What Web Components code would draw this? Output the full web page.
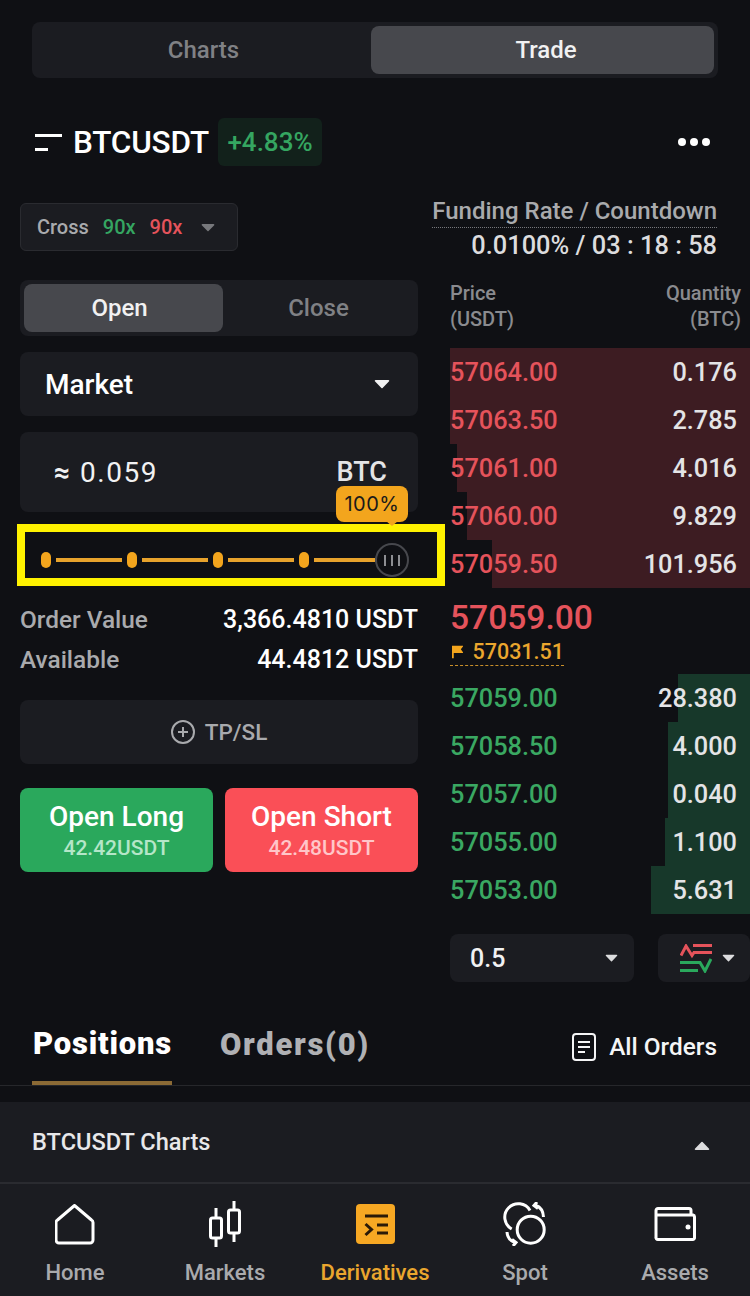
<!DOCTYPE html>
<html>
<head>
<meta charset="utf-8">
<title>BTCUSDT Trade</title>
<style>
  html, body { margin: 0; background: #0f1014; }
  body { font-family: Roboto, "Liberation Sans", sans-serif; width: 750px; height: 1296px; overflow: hidden; }
</style>
</head>
<body>
<trade-app></trade-app>
<script>
const CARET = (color, w = 16, h = 10) =>
  `<svg width="${w}" height="${h}" viewBox="0 0 16 10"><path d="M1.5 1h13a.8.8 0 0 1 .6 1.3L8.6 9a.8.8 0 0 1-1.2 0L.9 2.3A.8.8 0 0 1 1.5 1z" fill="${color}"/></svg>`;

class SegControl extends HTMLElement {
  connectedCallback() {
    const items = this.getAttribute("items").split(",");
    const active = this.getAttribute("active");
    // the active pill is a bit wider than its neighbour and its label sits off-centre
    const width = this.getAttribute("active-width");
    const shift = this.getAttribute("active-shift");
    this.attachShadow({ mode: "open" }).innerHTML = `
      <style>
        :host { display: flex; box-sizing: border-box; padding: 4px; background: #1b1c21; border-radius: 8px; height: 56px; }
        div { flex: 1; display: flex; align-items: center; justify-content: center; border-radius: 8px;
              font-size: 24px; font-weight: 500; color: #808185; }
        .on { flex: 0 0 ${width}px; box-sizing: border-box; background: #47484d; color: #f1f1f2; ${shift}; }
      </style>
      ${items.map(i => `<div class="${i === active ? "on" : ""}">${i}</div>`).join("")}`;
  }
}

class MarketHeader extends HTMLElement {
  connectedCallback() {
    this.attachShadow({ mode: "open" }).innerHTML = `
      <style>
        :host { display: flex; align-items: center; height: 48px; padding: 0 40px 0 34px; }
        svg { display: block; }
        .sym { width: 135px; white-space: nowrap; font-size: 31.500px; font-weight: 500; color: #fff; margin: 0 10px 0 11px; letter-spacing: -.2px; }
        .chg { height: 48px; width: 104px; display: flex; align-items: center; justify-content: center; background: #12211b;
               border-radius: 6px; color: #35a661; font-size: 26px; font-weight: 500; }
        .more { margin-left: auto; }
      </style>
      <svg width="28" height="18" viewBox="0 0 28 18"><path d="M1 2.500H28M1 16.500h13" stroke="#fff" stroke-width="3" fill="none"/></svg>
      <span class="sym">BTCUSDT</span>
      <span class="chg">+4.83%</span>
      <svg class="more" width="32" height="10" viewBox="0 0 32 10"><circle cx="4" cy="5" r="4" fill="#fff"/><circle cx="16" cy="5" r="4" fill="#fff"/><circle cx="28" cy="5" r="4" fill="#fff"/></svg>`;
  }
}

class LeverageChip extends HTMLElement {
  connectedCallback() {
    this.attachShadow({ mode: "open" }).innerHTML = `
      <style>
        :host { display: flex; align-items: center; box-sizing: border-box; width: 218px; height: 48px; padding-left: 16px;
                background: #1b1c21; border: 1px solid #2a2b30; border-radius: 6px; font-size: 20px; font-weight: 500; }
        .c { color: #a9aaad; margin-right: 14px; }
        .g { color: #35a661; margin-right: 14px; }
        .r { color: #e5535b; margin-right: 19px; }
      </style>
      <span class="c">Cross</span><span class="g">90x</span><span class="r">90x</span>${CARET("#77787c", 14, 9)}`;
  }
}

class FundingInfo extends HTMLElement {
  connectedCallback() {
    this.attachShadow({ mode: "open" }).innerHTML = `
      <style>
        :host { display: flex; flex-direction: column; align-items: flex-end; }
        .t { font-size: 24px; font-weight: 500; color: #a9aaad; line-height: 31px; border-bottom: 1px dotted #77787c; }
        .v { font-size: 25.400px; font-weight: 500; color: #dcdcde; line-height: 34px; }
      </style>
      <span class="t">Funding Rate / Countdown</span>
      <span class="v">0.0100% / 03 : 18 : 58</span>`;
  }
}

class CardBox extends HTMLElement {
  connectedCallback() {
    this.attachShadow({ mode: "open" }).innerHTML = `
      <style>
        :host { display: flex; align-items: center; justify-content: space-between; box-sizing: border-box;
                background: #1b1c21; border-radius: 8px; }
      </style>
      <slot></slot>`;
  }
}

class PercentSlider extends HTMLElement {
  connectedCallback() {
    const seg = `<i class="dot"></i><i class="seg"></i>`;
    this.attachShadow({ mode: "open" }).innerHTML = `
      <style>
        :host { display: flex; position: relative; align-items: center; box-sizing: border-box; width: 428px; height: 62px;
                margin-left: -3px; padding: 10px 28px 0 16px; border: 8px solid #fff200; }
        .dot { flex: none; width: 10px; height: 16px; border-radius: 5px; background: #f3a51d; margin-right: 5px; }
        .seg { flex: 0 0 66px; height: 4px; background: #e8a32c; margin-right: 5px; }
        .seg.end { flex: 1; margin-right: 0; }
        .thumb { flex: none; box-sizing: border-box; width: 34px; height: 34px; border: 2px solid #47484d; border-radius: 50%;
                 display: flex; align-items: center; justify-content: center; }
        .tip { position: absolute; left: 311px; top: -46px; width: 72px; height: 36px; border-radius: 8px; background: #f3a51d;
               color: #1a1a1a; font: 400 20px Inter, Roboto, sans-serif; letter-spacing: .5px;
               display: flex; align-items: center; justify-content: center; }
        .tip::after { content: ""; position: absolute; left: 50px; bottom: -4px; border: 6px solid transparent; border-bottom: 0;
                      border-top: 5px solid #f3a51d; }
      </style>
      ${seg}${seg}${seg}<i class="dot"></i><i class="seg end"></i>
      <span class="thumb"><svg width="16" height="11" viewBox="0 0 16 11"><path d="M1 0v11M8 0v11M15 0v11" stroke="#8d8e92" stroke-width="2"/></svg></span>
      <span class="tip">100%</span>`;
  }
}

class InfoRow extends HTMLElement {
  connectedCallback() {
    this.attachShadow({ mode: "open" }).innerHTML = `
      <style>
        :host { display: flex; align-items: center; justify-content: space-between; height: 40px; font-weight: 500; }
        .l { color: #a9aaad; font-size: 24.400px; }
        .v { color: #fff; font-size: 25px; }
      </style>
      <span class="l">${this.getAttribute("label")}</span><span class="v">${this.getAttribute("value")}</span>`;
  }
}

class TradeButton extends HTMLElement {
  connectedCallback() {
    const short = this.getAttribute("side") === "short";
    this.attachShadow({ mode: "open" }).innerHTML = `
      <style>
        :host { flex: 1; display: flex; flex-direction: column; align-items: center; justify-content: center; height: 84px;
                border-radius: 8px; background: ${short ? "#fa4f57" : "#2aa85c"}; }
        .a { font-size: 28px; font-weight: 500; color: #fff; line-height: 36px; }
        .b { font-size: 21px; font-weight: 500; line-height: 26px; color: ${short ? "#ffc6c9" : "#b5e6c8"}; }
      </style>
      <span class="a">${this.getAttribute("label")}</span><span class="b">${this.getAttribute("sub")}</span>`;
  }
}

class OrderForm extends HTMLElement {
  connectedCallback() {
    this.attachShadow({ mode: "open" }).innerHTML = `
      <style>
        :host { display: flex; flex-direction: column; width: 398px; flex: none; }
        .market { height: 64px; margin-top: 16px; padding: 0 28px 0 25px; color: #fff; font-size: 28px; font-weight: 500; }
        .amount { height: 80px; margin-top: 16px; margin-bottom: 12px; padding: 0 31px 0 34px; }
        .amt { color: #f1f1f2; font-size: 28px; letter-spacing: 1.500px; }
        .amt b { font-weight: 700; }
        .unit { color: #e4e4e6; font-size: 27px; font-weight: 500; }
        .rows { margin-top: 13px; }
        .tpsl { height: 64px; margin-top: 21px; justify-content: center; gap: 10px; color: #a9aaad; font-size: 22.500px; font-weight: 500; }
        .btns { display: flex; gap: 12px; margin-top: 24px; }
        svg { display: block; }
      </style>
      <seg-control items="Open,Close" active="Open" active-width="199" active-shift="padding-right: 8px"></seg-control>
      <card-box class="market"><span>Market</span>${CARET("#f1f1f2")}</card-box>
      <card-box class="amount"><span class="amt"><b>≈</b> 0.059</span><span class="unit">BTC</span></card-box>
      <percent-slider></percent-slider>
      <div class="rows">
        <info-row label="Order Value" value="3,366.4810 USDT"></info-row>
        <info-row label="Available" value="44.4812 USDT"></info-row>
      </div>
      <card-box class="tpsl">
        <svg width="24" height="24" viewBox="0 0 24 24" fill="none" stroke="#a9aaad" stroke-width="2"><circle cx="12" cy="12" r="11"/><path d="M12 7v10M7 12h10"/></svg>
        <span>TP/SL</span>
      </card-box>
      <div class="btns">
        <trade-button side="long" label="Open Long" sub="42.42USDT"></trade-button>
        <trade-button side="short" label="Open Short" sub="42.48USDT"></trade-button>
      </div>`;
  }
}

class BookRow extends HTMLElement {
  connectedCallback() {
    const ask = this.getAttribute("side") === "ask";
    const w = this.getAttribute("depth") + "px";
    const bar = ask ? "#3d1c22" : "#17382a";
    this.attachShadow({ mode: "open" }).innerHTML = `
      <style>
        :host { display: flex; align-items: center; justify-content: space-between; box-sizing: border-box; height: 48px;
                padding: 0 13px 0 0; font-size: 25.300px; font-weight: 500;
                background: linear-gradient(to left, ${bar} ${w}, transparent ${w}); }
        .p { color: ${ask ? "#e5535b" : "#3aa862"}; }
        .q { color: #e4e4e6; }
      </style>
      <span class="p">${this.getAttribute("price")}</span><span class="q">${this.getAttribute("qty")}</span>`;
  }
}

class OrderBook extends HTMLElement {
  connectedCallback() {
    const row = (side, price, qty, depth) => `<book-row side="${side}" price="${price}" qty="${qty}" depth="${depth}"></book-row>`;
    this.attachShadow({ mode: "open" }).innerHTML = `
      <style>
        :host { display: flex; flex-direction: column; width: 300px; flex: none; margin-left: 32px; }
        .head { display: flex; justify-content: space-between; height: 68px; padding-right: 9px; box-sizing: border-box;
                font-size: 20px; line-height: 26px; color: #8a8b8f; font-weight: 500; }
        .head div:last-child { text-align: right; }
        .mid { height: 86px; box-sizing: border-box; padding: 10px 0 0 0; }
        .last { font-size: 33.600px; font-weight: 500; color: #e5535b; line-height: 40px; }
        .mark { display: inline-flex; align-items: center; gap: 9px; width: 114px; padding-left: 2px; box-sizing: border-box;
                height: 28px; border-bottom: 1px dashed #c98f2a; color: #eaa62e; font-size: 21.500px; font-weight: 500; }
        .foot { display: flex; justify-content: space-between; margin-top: 20px; }
        .sel { height: 48px; box-sizing: border-box; }
        .s1 { width: 184px; padding: 0 16px 0 20px; color: #f1f1f2; font-size: 25px; font-weight: 500; }
        .s2 { width: 92px; padding: 0 15px 0 22px; }
        svg { display: block; }
      </style>
      <div class="head"><div>Price<br>(USDT)</div><div>Quantity<br>(BTC)</div></div>
      ${row("ask", "57064.00", "0.176", 300)}
      ${row("ask", "57063.50", "2.785", 300)}
      ${row("ask", "57061.00", "4.016", 293)}
      ${row("ask", "57060.00", "9.829", 283)}
      ${row("ask", "57059.50", "101.956", 258)}
      <div class="mid">
        <div class="last">57059.00</div>
        <div class="mark">
          <svg width="13" height="14" viewBox="0 0 13 14"><path d="M0 0h13l-3 4 3 4H2v6H0z" fill="#f3a51d"/></svg>
          <span>57031.51</span>
        </div>
      </div>
      ${row("bid", "57059.00", "28.380", 72)}
      ${row("bid", "57058.50", "4.000", 82)}
      ${row("bid", "57057.00", "0.040", 82)}
      ${row("bid", "57055.00", "1.100", 85)}
      ${row("bid", "57053.00", "5.631", 99)}
      <div class="foot">
        <card-box class="sel s1"><span>0.5</span>${CARET("#dcdcde", 13, 8)}</card-box>
        <card-box class="sel s2">
          <svg width="32" height="29" viewBox="0 0 32 29" fill="none" stroke-width="3">
            <path d="M1 11.500 6 2l6 9.500 2-3h18M13 1.500h19" stroke="#e5535b"/>
            <path d="M0 18.500h20l5 8.500 6-12M0 26.500h18" stroke="#2aa85c"/>
          </svg>
          ${CARET("#dcdcde", 13, 8)}
        </card-box>
      </div>`;
  }
}

class PositionTabs extends HTMLElement {
  connectedCallback() {
    this.attachShadow({ mode: "open" }).innerHTML = `
      <style>
        :host { display: flex; align-items: stretch; box-sizing: border-box; height: 84px; padding: 0 33px 0 32px;
                border-bottom: 1px solid #26272b; }
        .tab { display: flex; align-items: center; height: 83px; box-sizing: border-box; font-size: 31px; font-weight: 900; }
        .on { width: 140px; color: #fff; border-bottom: 4px solid #8b6a35; padding-top: 4px; padding-left: 1px; letter-spacing: .8px; }
        .off { color: #b0b1b4; margin-left: 48px; padding-top: 1px; letter-spacing: 1.700px; }
        .all { margin-left: auto; display: flex; align-items: center; gap: 13px; padding-top: 6px; color: #f5f5f6; font-size: 24.400px; font-weight: 500; }
        svg { display: block; }
      </style>
      <div class="tab on">Positions</div>
      <div class="tab off">Orders(0)</div>
      <div class="all">
        <svg width="24" height="28" viewBox="0 0 24 28" fill="none" stroke="#f5f5f6" stroke-width="2"><rect x="1" y="1" width="22" height="26" rx="3"/><path d="M6 9h12M6 14h12M6 19h7"/></svg>
        <span>All Orders</span>
      </div>`;
  }
}

class ChartsBar extends HTMLElement {
  connectedCallback() {
    this.attachShadow({ mode: "open" }).innerHTML = `
      <style>
        :host { display: flex; align-items: center; justify-content: space-between; box-sizing: border-box; height: 82px; margin-top: 16px;
                padding: 0 40px 0 32px; background: #1b1c21; border-bottom: 2px solid #2a2b30;
                color: #e8e8ea; font-size: 23.600px; font-weight: 500; }
        svg { display: block; transform: rotate(180deg); margin-top: 8px; }
      </style>
      <span>BTCUSDT Charts</span>${CARET("#dcdcde")}`;
  }
}

const NAV_ICONS = {
  home: `<svg width="41" height="41" viewBox="1 0 41 41" fill="none" stroke="#fff" stroke-width="3"><path d="M20.500 1.500 37.500 16a3 3 0 0 1 1.500 2.500V36a3 3 0 0 1-3 3H5a3 3 0 0 1-3-3V18.500a3 3 0 0 1 1.500-2.500z" stroke-linejoin="round"/></svg>`,
  markets: `<svg width="32" height="46" viewBox="0 0 32 46" fill="none" stroke="#fff" stroke-width="3"><rect x="1.500" y="17" width="11" height="20" rx="2"/><rect x="19.500" y="9" width="11" height="23" rx="2"/><path d="M7 7v10M7 37v9M25 0v9M25 32v9"/></svg>`,
  derivatives: `<svg width="39" height="40" viewBox="0 0 39 40"><rect width="39" height="40" rx="4" fill="#f7a823"/><path d="M9 12h23M21 21h11M21 29h11M9.500 20l6 5.500-6 5.500" fill="none" stroke="#2a1a08" stroke-width="3"/></svg>`,
  spot: `<svg width="44" height="44" viewBox="-1 0 44 44" fill="none" stroke="#fff" stroke-width="3"><circle cx="26.700" cy="27.700" r="13.500"/><path d="M7.700 27A13.500 13.500 0 1 1 26 8.500"/><path d="M32 3.500Q39 6 39.500 15M33 0l-3 3.500 4 3M3 30Q3.500 38 11 40.500M9 44l3-3.500-4-3"/></svg>`,
  assets: `<svg width="42" height="34" viewBox="0 0 42 34" fill="none" stroke="#fff" stroke-width="3"><path d="M2 8V3.500a2 2 0 0 1 2-2h31a2 2 0 0 1 2 2V8M2 8h37a2 2 0 0 1 1.500 2v20a2 2 0 0 1-2 2.500H4a2 2 0 0 1-2-2.500z"/><circle cx="34" cy="20" r="2.500" fill="#fff" stroke="none"/></svg>`
};

class NavItem extends HTMLElement {
  connectedCallback() {
    const on = this.hasAttribute("active");
    this.attachShadow({ mode: "open" }).innerHTML = `
      <style>
        :host { display: flex; flex-direction: column; align-items: center; }
        .i { height: 50px; display: flex; align-items: center; justify-content: center; }
        .l { margin-top: 10px; font-size: 22px; font-weight: 500; line-height: 28px; color: ${on ? "#eaa62e" : "#a9aaad"}; }
      </style>
      <div class="i">${NAV_ICONS[this.getAttribute("icon")]}</div>
      <span class="l">${this.getAttribute("label")}</span>`;
  }
}

class BottomNav extends HTMLElement {
  connectedCallback() {
    this.attachShadow({ mode: "open" }).innerHTML = `
      <style>
        :host { display: grid; grid-template-columns: repeat(5, 1fr); box-sizing: border-box; height: 112px; padding-top: 15px; background: #1b1c21; }
      </style>
      <nav-item icon="home" label="Home"></nav-item>
      <nav-item icon="markets" label="Markets"></nav-item>
      <nav-item icon="derivatives" label="Derivatives" active></nav-item>
      <nav-item icon="spot" label="Spot"></nav-item>
      <nav-item icon="assets" label="Assets"></nav-item>`;
  }
}

class TradeApp extends HTMLElement {
  connectedCallback() {
    this.attachShadow({ mode: "open" }).innerHTML = `
      <style>
        :host { display: block; width: 750px; height: 1296px; background: #0f1014; color: #fff; padding-top: 22px; box-sizing: border-box; }
        .top { margin: 0 32px 0 32px; }
        market-header { margin-top: 40px; }
        .info { display: flex; justify-content: space-between; align-items: flex-start; height: 66px; margin-top: 30px; padding: 0 33px 0 20px; }
        leverage-chip { margin-top: 7px; }
        .cols { display: flex; margin-top: 18px; padding-left: 20px; }
        position-tabs { margin-top: 20px; }
      </style>
      <seg-control class="top" items="Charts,Trade" active="Trade" active-width="343" active-shift="padding-left: 7px"></seg-control>
      <market-header></market-header>
      <div class="info"><leverage-chip></leverage-chip><funding-info></funding-info></div>
      <div class="cols"><order-form></order-form><order-book></order-book></div>
      <position-tabs></position-tabs>
      <charts-bar></charts-bar>
      <bottom-nav></bottom-nav>`;
  }
}

customElements.define("seg-control", SegControl);
customElements.define("market-header", MarketHeader);
customElements.define("leverage-chip", LeverageChip);
customElements.define("funding-info", FundingInfo);
customElements.define("card-box", CardBox);
customElements.define("percent-slider", PercentSlider);
customElements.define("info-row", InfoRow);
customElements.define("trade-button", TradeButton);
customElements.define("order-form", OrderForm);
customElements.define("book-row", BookRow);
customElements.define("order-book", OrderBook);
customElements.define("position-tabs", PositionTabs);
customElements.define("charts-bar", ChartsBar);
customElements.define("nav-item", NavItem);
customElements.define("bottom-nav", BottomNav);
customElements.define("trade-app", TradeApp);
</script>
</body>
</html>
